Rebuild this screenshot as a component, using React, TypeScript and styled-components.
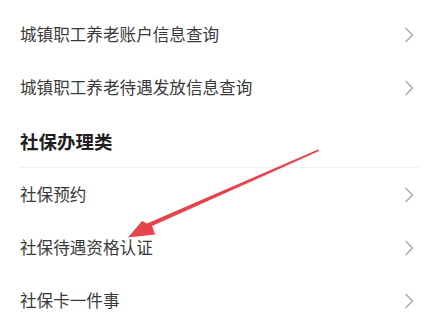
import React from 'react'
import styled, { createGlobalStyle } from 'styled-components'

const GlobalStyle = createGlobalStyle`
  html, body {
    margin: 0;
    padding: 0;
    background: #fff;
  }
  body {
    font-family: "Noto Sans CJK SC", "Noto Sans", sans-serif;
  }
`

interface Section {
  title?: string
  items: Array<string>
}

const sections: Array<Section> = [
  { items: ['城镇职工养老账户信息查询', '城镇职工养老待遇发放信息查询'] },
  { title: '社保办理类', items: ['社保预约', '社保待遇资格认证', '社保卡一件事'] },
]

function Chevron() {
  return (
    <ChevronIcon width="10" height="16" viewBox="0 0 10 16">
      <path d="M1.5 1 L8.5 8 L1.5 15" fill="none" stroke="#a6a6a6" strokeWidth="1.3" />
    </ChevronIcon>
  )
}

export default function App() {
  return (
    <>
      <GlobalStyle />
      <Page>
        {sections.map((section, i) => (
          <Group key={i}>
            {section.title && <Header>{section.title}</Header>}
            {section.items.map(item => (
              <Row key={item}>
                <Label>{item}</Label>
                <Chevron />
              </Row>
            ))}
          </Group>
        ))}

        {/* red annotation arrow over the list */}
        <Arrow width="427" height="325" viewBox="0 0 427 325">
          <polygon
            points="318,149.5 319,151 152,226 155,234.5 128,237.5 142,221 147,223.5"
            fill="#e8424b"
          />
        </Arrow>
      </Page>
    </>
  )
}

///////////////////////////////////////////////////////////////////////////////////

const Page = styled.div`
  position: relative;
  width: 427px;
  height: 325px;
  overflow: hidden;
  padding-top: 8px;
  box-sizing: border-box;
`

const Group = styled.section`
  display: flex;
  flex-direction: column;
  padding-left: 20px;
  padding-right: 8px;
`

const Header = styled.h3`
  margin: 0;
  height: 53px;
  display: flex;
  align-items: center;
  font-size: 18.5px;
  font-weight: 700;
  color: #1f1f1f;
  border-bottom: 1px solid #f0f0f0;
`

const Row = styled.div`
  height: 53px;
  display: flex;
  align-items: center;
  justify-content: space-between;
`

const Label = styled.span`
  font-size: 16.6px;
  line-height: 1;
  color: #3a3a3a;
`

const ChevronIcon = styled.svg`
  flex: none;
  margin-right: 5px;
`

const Arrow = styled.svg`
  position: absolute;
  left: 0;
  top: 0;
  pointer-events: none;
`
